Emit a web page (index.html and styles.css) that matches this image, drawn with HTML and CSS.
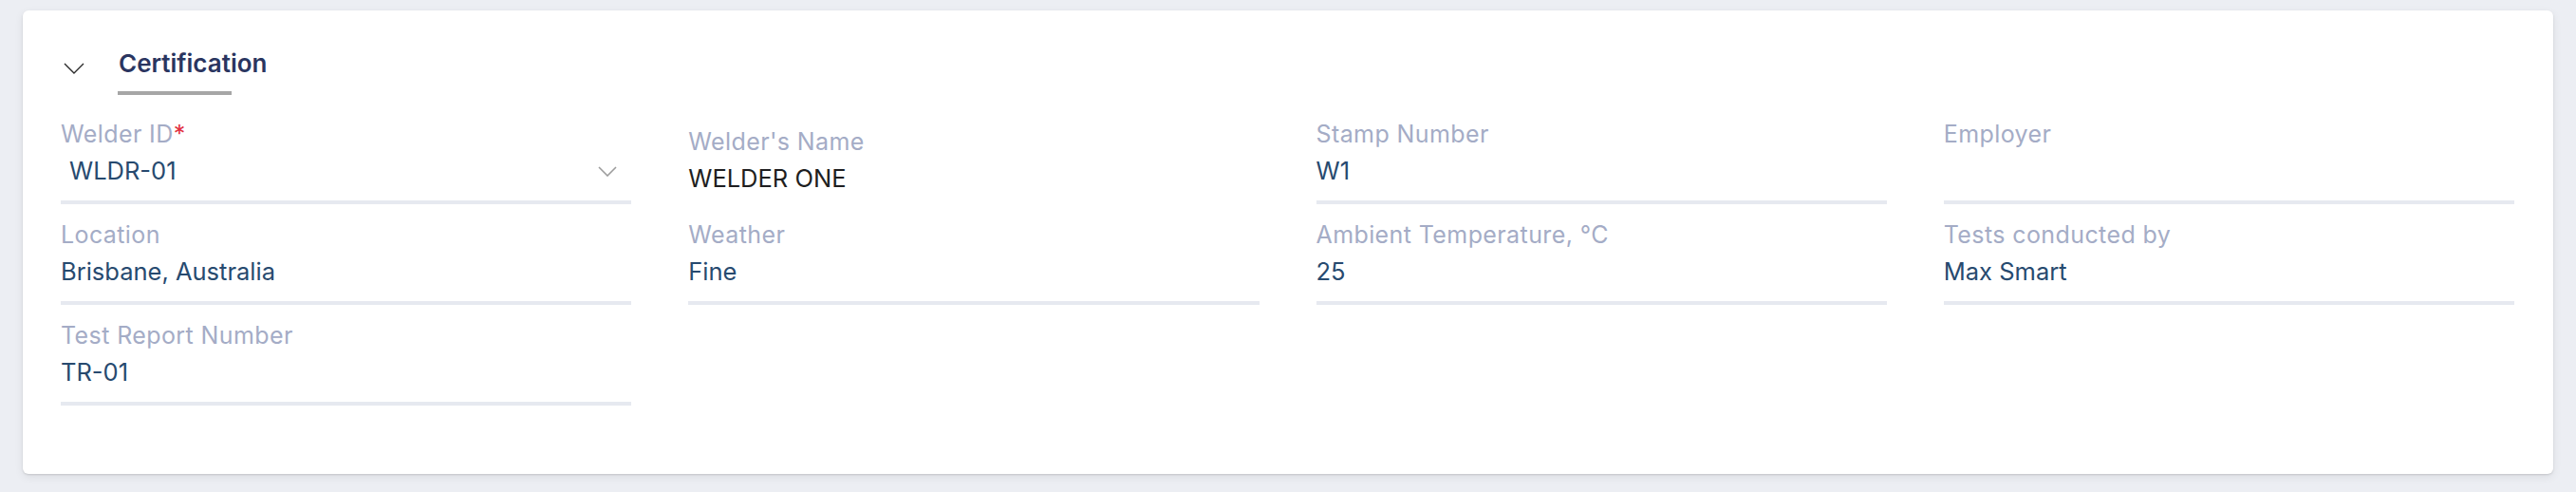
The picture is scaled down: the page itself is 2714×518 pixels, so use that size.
FILE: index.html
```html
<!DOCTYPE html>
<html lang="en">
<head>
    <meta charset="UTF-8">
    <meta name="viewport" content="width=device-width, initial-scale=1.0">
    <title>Certification</title>
    <link rel="stylesheet" href="styles.css">
</head>
<body>
    <div class="card">
        <div class="section-head">
            <svg class="toggle" width="22" height="12" viewBox="0 0 22 12">
                <path d="M1 1 L11 11 L21 1" fill="none" stroke="#2b2b2b" stroke-width="1.4"/>
            </svg>
            <div class="tab">
                <div class="tab-title">Certification</div>
                <div class="tab-bar"></div>
            </div>
        </div>

        <div class="fields">
            <div class="field">
                <div class="field-label">Welder ID<span class="req">*</span></div>
                <div class="field-value select">
                    <span>WLDR-01</span>
                    <svg width="20" height="11" viewBox="0 0 20 11">
                        <path d="M1 1 L10 10 L19 1" fill="none" stroke="#9c9c9c" stroke-width="1.6"/>
                    </svg>
                </div>
            </div>
            <div class="field readonly">
                <div class="field-label">Welder's Name</div>
                <div class="field-value">WELDER ONE</div>
            </div>
            <div class="field">
                <div class="field-label">Stamp Number</div>
                <div class="field-value">W1</div>
            </div>
            <div class="field">
                <div class="field-label">Employer</div>
                <div class="field-value"></div>
            </div>

            <div class="field">
                <div class="field-label">Location</div>
                <div class="field-value">Brisbane, Australia</div>
            </div>
            <div class="field">
                <div class="field-label">Weather</div>
                <div class="field-value">Fine</div>
            </div>
            <div class="field">
                <div class="field-label">Ambient Temperature, °C</div>
                <div class="field-value">25</div>
            </div>
            <div class="field">
                <div class="field-label">Tests conducted by</div>
                <div class="field-value">Max Smart</div>
            </div>

            <div class="field">
                <div class="field-label">Test Report Number</div>
                <div class="field-value">TR-01</div>
            </div>
        </div>
    </div>
</body>
</html>
```

FILE: styles.css
```css
body {
    font-family: Inter, "Noto Sans", sans-serif;
    margin: 0;
    padding: 11px 24px 19px;
    background-color: #eceef3;
}
.card {
    background-color: #fff;
    border-radius: 6px;
    padding: 40px 41px 72px 40px;
    box-shadow: 0 1px 2px rgba(0,0,0,0.12), 0 3px 10px rgba(0,0,0,0.08);
}
.section-head {
    display: flex;
    align-items: flex-start;
    gap: 36px;
    padding-left: 3px;
}
.toggle {
    margin-top: 15px;
}
.tab-title {
    font-size: 26px;
    line-height: 32px;
    font-weight: 600;
    color: #2a3560;
    padding-bottom: 13px;
}
.tab-bar {
    width: 120px;
    height: 4px;
    margin-left: -1px;
    background-color: #a6a6a6;
}
.fields {
    display: grid;
    grid-template-columns: repeat(4, 1fr);
    column-gap: 60px;
    row-gap: 17px;
    margin-top: 26px;
}
.field {
    border-bottom: 4px solid #e6e9f0;
}
.field-label {
    font-size: 25px;
    line-height: 30px;
    letter-spacing: 0.4px;
    color: #a4acc6;
}
.req {
    color: #e2313f;
}
.field-value {
    font-size: 25.5px;
    line-height: 32px;
    height: 32px;
    margin-top: 8px;
    padding-bottom: 15px;
    color: #274a6f;
}
.field-value.select {
    display: flex;
    align-items: center;
    justify-content: space-between;
    padding-left: 9px;
    padding-right: 15px;
}
.field.readonly {
    border-bottom: none;
    padding-top: 8px;
}
.field.readonly .field-value {
    padding-bottom: 0;
    color: #1e1e20;
}
```
